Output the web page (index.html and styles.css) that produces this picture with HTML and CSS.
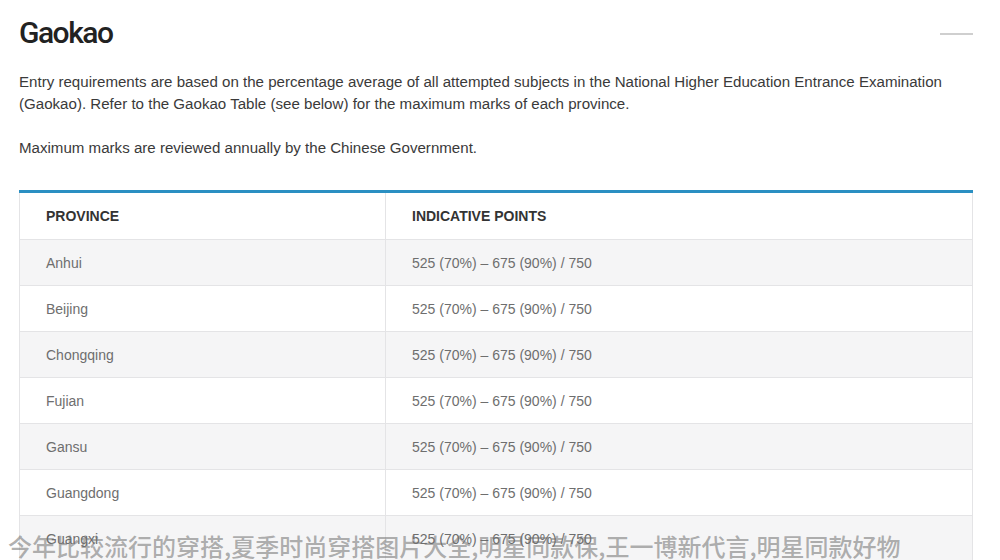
FILE: index.html
```html
<!DOCTYPE html>
<html lang="en">
<head>
    <meta charset="UTF-8">
    <meta name="viewport" content="width=device-width, initial-scale=1.0">
    <title>Gaokao</title>
    <link rel="stylesheet" href="styles.css">
</head>
<body>
    <div class="container">
        <header class="section-head">
            <h2>Gaokao</h2>
            <span class="collapse-line"></span>
        </header>

        <p>Entry requirements are based on the percentage average of all attempted subjects in the National Higher Education Entrance Examination (Gaokao). Refer to the Gaokao Table (see below) for the maximum marks of each province.</p>
        <p>Maximum marks are reviewed annually by the Chinese Government.</p>

        <table class="points-table">
            <thead>
                <tr><th>PROVINCE</th><th>INDICATIVE POINTS</th></tr>
            </thead>
            <tbody>
                <tr><td>Anhui</td><td>525 (70%) – 675 (90%) / 750</td></tr>
                <tr><td>Beijing</td><td>525 (70%) – 675 (90%) / 750</td></tr>
                <tr><td>Chongqing</td><td>525 (70%) – 675 (90%) / 750</td></tr>
                <tr><td>Fujian</td><td>525 (70%) – 675 (90%) / 750</td></tr>
                <tr><td>Gansu</td><td>525 (70%) – 675 (90%) / 750</td></tr>
                <tr><td>Guangdong</td><td>525 (70%) – 675 (90%) / 750</td></tr>
                <tr><td>Guangxi</td><td>525 (70%) – 675 (90%) / 750</td></tr>
            </tbody>
        </table>
    </div>

    <div class="watermark">今年比较流行的穿搭,夏季时尚穿搭图片大全,明星同款保,王一博新代言,明星同款好物</div>
</body>
</html>
```

FILE: styles.css
```css
:root {
    --text-color: #3a3a3a; --text-secondary: #6e6e6e; --accent-color: #2a8fc2;
    --border-color: #e4e4e6; --row-alt: #f5f5f6;
}
html, body { height: 100%; overflow: hidden; }
body { font-family: 'Liberation Sans', Arial, sans-serif; color: var(--text-color); background: #fff; margin: 0; }
.container { padding: 16px 27px 0 19px; }
.section-head { display: flex; justify-content: space-between; align-items: center; }
.section-head h2 { font-family: 'Roboto', sans-serif; font-weight: 500; font-size: 30px; letter-spacing: -1.5px; line-height: 34px; margin: 0; color: #222; }
.collapse-line { width: 33px; height: 2px; background: #cfcfcf; margin-top: 2px; }
p { font-size: 15.1px; line-height: 22px; margin: 21px 0 0; }
p + p { margin-top: 22px; }
.points-table { width: 100%; border-collapse: collapse; margin-top: 31px; border-top: 3px solid var(--accent-color); font-size: 14px; }
.points-table th, .points-table td { border: 1px solid var(--border-color); text-align: left; padding: 0 26px; height: 45px; }
.points-table th { font-weight: 700; color: #333; height: 46px; }
.points-table th:first-child, .points-table td:first-child { width: 313px; }
.points-table td { color: var(--text-secondary); }
.points-table tbody tr:nth-child(odd) { background: var(--row-alt); }
.watermark { position: absolute; left: 8px; top: 532px; font-family: 'Noto Sans CJK SC', sans-serif; font-size: 24px; line-height: 28px; color: rgba(110, 110, 110, 0.55); font-weight: 500; white-space: nowrap; }
```
